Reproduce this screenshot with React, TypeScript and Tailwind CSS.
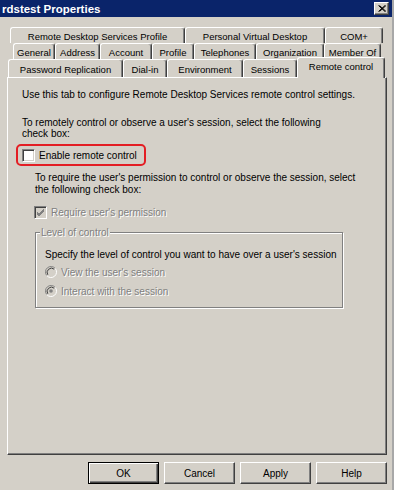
import React from "react";

const F = "font-['Liberation_Sans',Arial,sans-serif]";

function Tab({ w, label, sel }: { w: number; label: string; sel?: boolean }) {
  if (sel) {
    return (
      <div
        style={{ width: w }}
        className="relative z-10 -mt-[2px] -mb-[1px] h-[21px] bg-[#d4d0c8] border-l border-t border-white border-r border-r-[#404040] rounded-t-[3px] shadow-[inset_-1px_0_0_#808080] flex items-start justify-center pt-[3px] text-black text-[9.5px]"
      >
        {label}
      </div>
    );
  }
  return (
    <div
      style={{ width: w }}
      className="h-full bg-[#d4d0c8] border-l border-t border-white border-r border-r-[#404040] rounded-t-[3px] shadow-[inset_-1px_0_0_#808080] flex items-center justify-center pt-[1px] text-black text-[9.5px] whitespace-nowrap"
    >
      {label}
    </div>
  );
}

function Check({ checked, disabled }: { checked?: boolean; disabled?: boolean }) {
  return (
    <div
      className={`w-[13px] h-[13px] shrink-0 border border-t-[#808080] border-l-[#808080] border-b-white border-r-white shadow-[inset_1px_1px_0_#404040,inset_-1px_-1px_0_#d4d0c8] ${
        disabled ? "bg-[#d4d0c8]" : "bg-white"
      } flex items-center justify-center`}
    >
      {checked && (
        <svg width="9" height="9" viewBox="0 0 9 9">
          <path d="M1 4 L3 6 L8 1 M1 5 L3 7 L8 2 M1 6 L3 8 L8 3" stroke="#808080" strokeWidth="1" fill="none" />
        </svg>
      )}
    </div>
  );
}

function Radio({ on }: { on?: boolean }) {
  return (
    <svg width="12" height="12" viewBox="0 0 12 12" className="shrink-0">
      <circle cx="6" cy="6" r="5" fill="#d4d0c8" />
      <path d="M10.2 2.4 A5.5 5.5 0 0 0 1.8 9.6" stroke="#808080" strokeWidth="1" fill="none" />
      <path d="M9.2 3.2 A4.3 4.3 0 0 0 2.8 8.8" stroke="#404040" strokeWidth="1" fill="none" />
      <path d="M1.8 9.6 A5.5 5.5 0 0 0 10.2 2.4" stroke="#ffffff" strokeWidth="1" fill="none" />
      {on && <circle cx="6" cy="6" r="1.8" fill="#808080" />}
    </svg>
  );
}

function Btn({ label, def }: { label: string; def?: boolean }) {
  return (
    <div
      className={`w-[71px] h-[22px] bg-[#d4d0c8] flex items-center justify-center text-black ${
        def
          ? "border border-black shadow-[inset_1px_1px_0_#fff,inset_-1px_-1px_0_#404040,inset_-2px_-2px_0_#808080]"
          : "border border-t-white border-l-white border-b-[#404040] border-r-[#404040] shadow-[inset_-1px_-1px_0_#808080]"
      }`}
    >
      {label}
    </div>
  );
}

const dis = "text-[#808080] [text-shadow:1px_1px_0_#ffffff]";

export default function App() {
  return (
    <div className={`${F} w-[394px] h-[490px] bg-[#d4d0c8] flex flex-col text-[10px] leading-[11px] text-black overflow-hidden border-r-2 border-r-[#a8a8a8]`}>
      {/* title bar */}
      <div className="h-[17px] bg-[#0a246a] flex items-center justify-between pl-[2px] pr-[3px] shrink-0">
        <span className="text-white font-bold text-[11.5px] leading-[14px]">rdstest Properties</span>
        <div className="w-[15px] h-[13px] bg-[#d4d0c8] border border-t-white border-l-white border-b-[#404040] border-r-[#404040] shadow-[inset_-1px_-1px_0_#808080] flex items-center justify-center">
          <svg width="8" height="7" viewBox="0 0 8 7">
            <path d="M0.5 0.5 L7 6.5 M1.5 0.5 L8 6.5 M7 0.5 L0.5 6.5 M8 0.5 L1.5 6.5" stroke="#000" strokeWidth="1" />
          </svg>
        </div>
      </div>

      {/* tabs */}
      <div className="flex flex-col pt-[10px] shrink-0">
        <div className="flex h-[16px] pl-[10px]">
          <Tab w={175} label="Remote Desktop Services Profile" />
          <Tab w={140} label="Personal Virtual Desktop" />
          <Tab w={58} label="COM+" />
        </div>
        <div className="flex h-[16px] pl-[13px]">
          <Tab w={42} label="General" />
          <Tab w={45} label="Address" />
          <Tab w={52} label="Account" />
          <Tab w={42} label="Profile" />
          <Tab w={62} label="Telephones" />
          <Tab w={68} label="Organization" />
          <Tab w={57} label="Member Of" />
        </div>
        <div className="flex h-[18px] pl-[8px] items-start">
          <Tab w={115} label="Password Replication" />
          <Tab w={44} label="Dial-in" />
          <Tab w={76} label="Environment" />
          <Tab w={54} label="Sessions" />
          <Tab w={88} label="Remote control" sel />
        </div>
      </div>

      {/* panel */}
      <div className="ml-[7px] mr-[5px] h-[378px] shrink-0 border border-t-white border-l-white border-b-[#404040] border-r-[#404040] shadow-[inset_-1px_-1px_0_#808080] flex flex-col pl-[14px]">
        <p className="mt-[11px] leading-[12px]">Use this tab to configure Remote Desktop Services remote control settings.</p>
        <p className="mt-[16px] w-[300px]">
          To remotely control or observe a user's session, select the following
          <br />
          check box:
        </p>
        <div className="mt-[5px] -ml-[6px] w-[130px] h-[22px] border-2 border-[#e31e24] rounded-[5px] flex items-center pl-[4px] gap-[4px]">
          <Check />
          <span>Enable remote control</span>
        </div>
        <p className="mt-[6px] ml-[13px] leading-[12px]">
          To require the user's permission to control or observe the session, select
          <br />
          the following check box:
        </p>
        <div className="mt-[10px] ml-[12px] flex items-center gap-[4px] h-[13px]">
          <Check checked disabled />
          <span className={dis}>Require user's permission</span>
        </div>
        <div className="mt-[13px] ml-[13px] w-[308px] h-[76px] border border-[#808080] shadow-[1px_1px_0_#fff,inset_1px_1px_0_#fff] relative flex flex-col pl-[9px]">
          <span className={`absolute -top-[6px] left-[4px] px-[1px] bg-[#d4d0c8] ${dis}`}>Level of control</span>
          <p className="mt-[16px]">Specify the level of control you want to have over a user's session</p>
          <div className="mt-[6px] flex items-center gap-[4px] h-[12px]">
            <Radio />
            <span className={dis}>View the user's session</span>
          </div>
          <div className="mt-[7px] flex items-center gap-[4px] h-[12px]">
            <Radio on />
            <span className={dis}>Interact with the session</span>
          </div>
        </div>
      </div>

      {/* buttons */}
      <div className="mt-[7px] flex justify-end gap-[5px] pr-[5px]">
        <Btn label="OK" def />
        <Btn label="Cancel" />
        <Btn label="Apply" />
        <Btn label="Help" />
      </div>
    </div>
  );
}
